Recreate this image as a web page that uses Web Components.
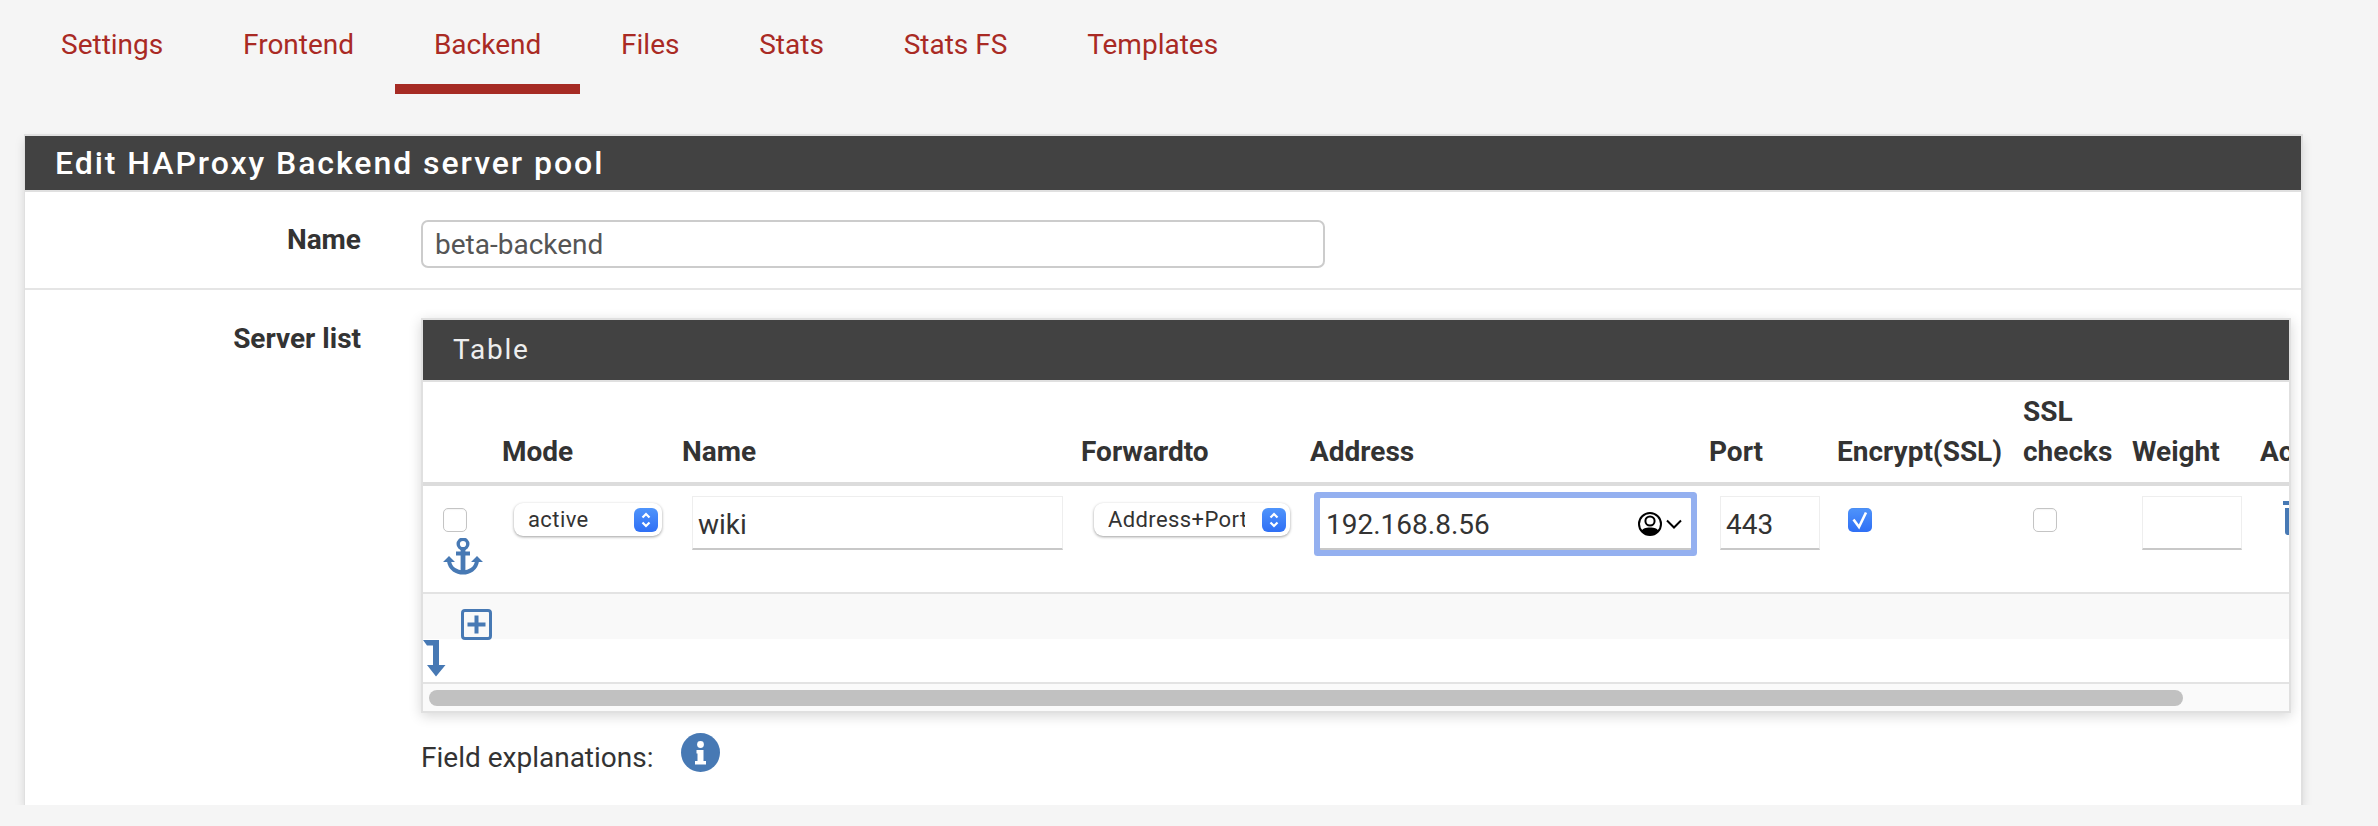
<!DOCTYPE html>
<html>
<head>
<meta charset="utf-8">
<style>
  html, body { margin: 0; background: #f5f5f5; }
  body { font-family: Roboto, "Liberation Sans", sans-serif; color: #333; font-size: 28px; }
</style>
</head>
<body>
<hap-tabs>
  <hap-tab>Settings</hap-tab>
  <hap-tab>Frontend</hap-tab>
  <hap-tab active>Backend</hap-tab>
  <hap-tab>Files</hap-tab>
  <hap-tab>Stats</hap-tab>
  <hap-tab>Stats FS</hap-tab>
  <hap-tab>Templates</hap-tab>
</hap-tabs>
<hap-panel heading="Edit HAProxy Backend server pool">
  <hap-row label="Name" short><hap-input value="beta-backend" kind="name"></hap-input></hap-row>
  <hap-row label="Server list">
    <hap-server-table></hap-server-table>
    <hap-help>Field explanations:</hap-help>
  </hap-row>
</hap-panel>
<script>
class HapTabs extends HTMLElement {
  constructor() {
    super();
    this.attachShadow({ mode: "open" });
    this.shadowRoot.innerHTML = `
      <style>
        :host { display: flex; padding-left: 22px; height: 94px; gap: 1.8px; }
      </style>
      <slot></slot>`;
  }
}
customElements.define("hap-tabs", HapTabs);

class HapTab extends HTMLElement {
  constructor() {
    super();
    this.attachShadow({ mode: "open" });
    this.shadowRoot.innerHTML = `
      <style>
        :host { display: block; box-sizing: border-box; height: 94px; padding: 28px 39px 0; color: #a92a24; font-size: 28px; line-height: 34px; }
        :host([active]) { border-bottom: 10px solid #a62b24; }
      </style>
      <slot></slot>`;
  }
}
customElements.define("hap-tab", HapTab);

class HapPanel extends HTMLElement {
  constructor() {
    super();
    this.attachShadow({ mode: "open" });
    this.shadowRoot.innerHTML = `
      <style>
        :host { display: block; box-sizing: border-box; width: 2279px; margin: 40px 0 0 24px; background: #fff; border: 2px solid #e0e0e0; border-left-width: 1px; border-bottom: 0; box-shadow: 0 5px 10px -1px rgba(0,0,0,.15); }
        .bar { height: 54px; line-height: 54px; padding-left: 30px; background: #424242; color: #fff; font-weight: 500; font-size: 32px; letter-spacing: 1.95px; border-bottom: 2px solid #e0e0e0; }
      </style>
      <div class="bar"></div>
      <slot></slot>`;
    this.shadowRoot.querySelector(".bar").textContent = this.getAttribute("heading");
  }
}
customElements.define("hap-panel", HapPanel);

class HapRow extends HTMLElement {
  constructor() {
    super();
    this.attachShadow({ mode: "open" });
    this.shadowRoot.innerHTML = `
      <style>
        :host { display: grid; grid-template-columns: 336px 1fr; column-gap: 60px; padding: 28px 0 33px; }
        :host([short]) { height: 96px; box-sizing: content-box; padding: 0; border-bottom: 2px solid #e5e5e5; }
        .label { text-align: right; font-weight: 700; font-size: 28px; line-height: 36px; color: #333; margin-top: 3px; }
        :host([short]) .label { margin-top: 30px; }
        :host([short]) .body { margin-top: 28px; }
        .body { min-width: 0; }
      </style>
      <div class="label"></div>
      <div class="body"><slot></slot></div>`;
    this.shadowRoot.querySelector(".label").textContent = this.getAttribute("label");
  }
}
customElements.define("hap-row", HapRow);

class HapInput extends HTMLElement {
  constructor() {
    super();
    this.attachShadow({ mode: "open" });
    this.shadowRoot.innerHTML = `
      <style>
        :host { display: block; box-sizing: border-box; height: 54px; margin-top: 10px; background: #fff; border: 1px solid #eee; border-bottom: 2px solid #c8c8c8; padding-left: 5px; font-size: 28px; line-height: 56px; color: #333; position: relative; white-space: nowrap; }
        :host([kind="name"]) { width: 904px; height: 48px; margin-top: 0; border: 2px solid #ccc; border-radius: 7px; padding-left: 12px; line-height: 46px; color: #555; }
        :host([focus]) { margin-top: 12px; height: 52px; border-width: 0 0 2px; padding-left: 6px; line-height: 54px; box-shadow: 0 0 0 6px #94b0f0; border-radius: 1px; }
        ::slotted(svg) { position: absolute; right: 9px; top: 14px; display: block; }
      </style>
      <span></span><slot></slot>`;
    this.shadowRoot.querySelector("span").textContent = this.getAttribute("value") || "";
  }
}
customElements.define("hap-input", HapInput);

class HapSelect extends HTMLElement {
  constructor() {
    super();
    this.attachShadow({ mode: "open" });
    this.shadowRoot.innerHTML = `
      <style>
        :host { display: block; box-sizing: border-box; height: 33px; margin-top: 17px; background: #fff; border-radius: 9px; box-shadow: 0 1px 3px rgba(0,0,0,.38); position: relative; font-size: 22px; letter-spacing: .4px; line-height: 34px; color: #333; padding-left: 14px; }
        .txt { display: block; overflow: hidden; white-space: nowrap; margin-right: 45px; }
        .step { position: absolute; right: 4px; top: 5px; width: 24px; height: 24px; border-radius: 6px; background: linear-gradient(#4f94fb, #2f6ff5); }
        svg { display: block; }
      </style>
      <span class="txt"></span>
      <div class="step"><svg width="24" height="24" viewBox="0 0 24 24" fill="none" stroke="#fff" stroke-width="2.2"><path d="M8.5 9.5l3.5-3.5 3.5 3.5M8.5 14.5l3.5 3.5 3.5-3.5"/></svg></div>`;
    this.shadowRoot.querySelector(".txt").textContent = this.getAttribute("value");
  }
}
customElements.define("hap-select", HapSelect);

class HapCheck extends HTMLElement {
  constructor() {
    super();
    this.attachShadow({ mode: "open" });
    this.shadowRoot.innerHTML = `
      <style>
        :host { display: block; box-sizing: border-box; width: 24px; height: 24px; margin-top: 22px; background: #fff; border: 1px solid #c4c4c4; border-radius: 5px; box-shadow: inset 0 1px 1px rgba(0,0,0,.04); }
        :host([checked]) { background: linear-gradient(#4f94fb, #2f6ff5); border: 0; }
        svg { display: block; }
      </style>
      ${this.hasAttribute("checked") ? `<svg width="24" height="24" viewBox="0 0 24 24" fill="none" stroke="#fff" stroke-width="2.6"><path d="M5.5 11.5L11 19L18 4.5"/></svg>` : ""}`;
  }
}
customElements.define("hap-check", HapCheck);

class HapServerTable extends HTMLElement {
  constructor() {
    super();
    this.attachShadow({ mode: "open" });
    this.shadowRoot.innerHTML = `
      <style>
        :host { display: block; box-sizing: border-box; width: 1870px; background: #fff; border: 2px solid #e0e0e0; box-shadow: 0 3px 12px rgba(0,0,0,.16); color: #333; }
        .title { height: 60px; line-height: 60px; padding-left: 30px; background: #424242; color: #eee; font-size: 28px; letter-spacing: 1.8px; border-bottom: 2px solid #e0e0e0; }
        .clip { overflow: hidden; }
        .inner { width: 1979px; }
        .grid { display: grid; grid-template-columns: 79px 180px 399px 229px 399px 128px 186px 109px 128px 142px; }
        .head { height: 100px; border-bottom: 4px solid #dcdcdc; }
        .head div { align-self: end; font-weight: 700; font-size: 28px; line-height: 40px; padding-bottom: 10px; white-space: nowrap; }
        .cells { height: 106px; border-bottom: 2px solid #e3e3e3; }
        .cells > div { padding: 0 17px 0 11px; }
        .cells > .c1 { padding: 0 0 0 20px; }
        .cells > .mode { padding: 0 20px 0 12px; }
        .cells > .name { padding: 0 18px 0 10px; }
        .cells > .fwd { padding: 0 20px 0 13px; }
        .cells > .addr { padding: 0 18px 0 10px; }
        .cells > .ssl { padding-left: 10px; }
        .cells > .wgt { padding: 0 18px 0 10px; }
        .cells > .act { padding: 0 0 0 23px; }
        .anchor { display: block; margin-top: 6px; }
        .trash { display: block; margin-top: 15px; }
        .foot { height: 45px; background: #f9f9f9; padding: 15px 0 0 38px; box-sizing: border-box; }
        .foot svg { display: block; position: relative; }
        .arrow-wrap { height: 45px; padding-top: 1px; box-sizing: border-box; border-bottom: 2px solid #e3e3e3; }
        .arrow-wrap svg { display: block; }
        .sbar { height: 27px; background: #fafafa; padding: 6px 0 0 6px; box-sizing: border-box; }
        .thumb { width: 1754px; height: 16px; border-radius: 8px; background: #c1c1c1; }
      </style>
      <div class="title">Table</div>
      <div class="clip"><div class="inner">
        <div class="grid head">
          <div></div><div>Mode</div><div>Name</div><div>Forwardto</div><div>Address</div><div>Port</div><div>Encrypt(SSL)</div><div>SSL<br>checks</div><div>Weight</div><div>Actions</div>
        </div>
        <div class="grid cells">
          <div class="c1">
            <hap-check></hap-check>
            <svg class="anchor" width="40" height="37" viewBox="0 0 40 37" fill="#4779b4">
              <circle cx="20" cy="6" r="4.8" fill="none" stroke="#4779b4" stroke-width="3.4"/>
              <rect x="13" y="13.5" width="14" height="4"/>
              <rect x="17.6" y="11" width="4.8" height="24"/>
              <path d="M6 23 C7 31 14 34.5 20 34.5 C26 34.5 33 31 34 23" fill="none" stroke="#4779b4" stroke-width="4"/>
              <path d="M6 18 L0 24 H12Z M34 18 L28 24 H40Z"/>
            </svg>
          </div>
          <div class="mode"><hap-select value="active"></hap-select></div>
          <div class="name"><hap-input value="wiki"></hap-input></div>
          <div class="fwd"><hap-select value="Address+Port"></hap-select></div>
          <div class="addr"><hap-input value="192.168.8.56" focus>
            <svg width="46" height="24" viewBox="0 0 46 24">
              <defs><clipPath id="pc"><circle cx="14" cy="12" r="11"/></clipPath></defs>
              <circle cx="14" cy="12" r="11" fill="#fff"/>
              <g clip-path="url(#pc)">
                <path d="M3 24 C5 16 10 15.5 14 15.5 C18 15.5 23 16 25 24Z" fill="#000"/>
                <circle cx="14" cy="9" r="4.6" fill="#fff" stroke="#000" stroke-width="2"/>
              </g>
              <circle cx="14" cy="12" r="11" fill="none" stroke="#000" stroke-width="2"/>
              <path d="M31 8.5l7 7 7-7" fill="none" stroke="#000" stroke-width="2"/>
            </svg>
          </hap-input></div>
          <div><hap-input value="443"></hap-input></div>
          <div><hap-check checked></hap-check></div>
          <div class="ssl"><hap-check></hap-check></div>
          <div class="wgt"><hap-input></hap-input></div>
          <div class="act">
            <svg class="trash" width="26" height="34" viewBox="0 0 26 34" fill="#4779b4">
              <rect x="0" y="0" width="26" height="4"/>
              <path d="M2 7h22v24a3 3 0 0 1-3 3H5a3 3 0 0 1-3-3Zm4 0v23h14V7Z" fill-rule="evenodd"/>
            </svg>
          </div>
        </div>
        <div class="foot">
          <svg width="31" height="31" viewBox="0 0 31 31" fill="none" stroke="#4779b4">
            <rect x="1.5" y="1.5" width="28" height="28" rx="2.5" stroke-width="3"/>
            <path d="M15.5 6.5v18M6.5 15.5h18" stroke-width="4"/>
          </svg>
        </div>
        <div class="arrow-wrap">
          <svg width="23" height="37" viewBox="0 0 23 37" fill="#4779b4"><path d="M0 0H16V25H22.5L13 36.5L4 25H10V5.5H4Z"/></svg>
        </div>
      </div></div>
      <div class="sbar"><div class="thumb"></div></div>`;
  }
}
customElements.define("hap-server-table", HapServerTable);

class HapHelp extends HTMLElement {
  constructor() {
    super();
    this.attachShadow({ mode: "open" });
    this.shadowRoot.innerHTML = `
      <style>
        :host { display: flex; align-items: center; margin-top: 20px; height: 39px; font-size: 28px; color: #333; }
        span { margin-top: 10px; }
        svg { margin-left: 27px; display: block; }
      </style>
      <span><slot></slot></span>
      <svg width="39" height="39" viewBox="0 0 39 39">
        <circle cx="19.5" cy="19.5" r="19.5" fill="#4779b4"/>
        <circle cx="19.5" cy="11.5" r="3.4" fill="#fff"/>
        <path d="M15.5 17h7v11h2.5v3.5H14V28h2.5v-7.5h-1Z" fill="#fff"/>
      </svg>`;
  }
}
customElements.define("hap-help", HapHelp);
</script>
</body>
</html>
